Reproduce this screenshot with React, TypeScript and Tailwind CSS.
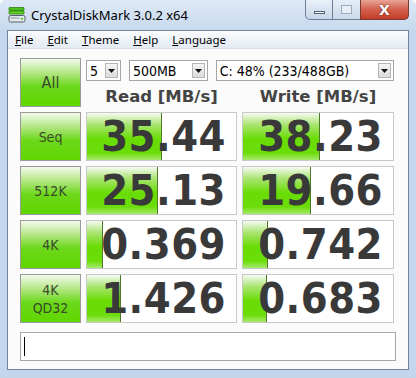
import React from "react";

const rows = [
  { label: ["Seq"], read: "35.44", rw: 75, write: "38.23", ww: 77 },
  { label: ["512K"], read: "25.13", rw: 71, write: "19.66", ww: 68 },
  { label: ["4K"], read: "0.369", rw: 16, write: "0.742", ww: 25 },
  { label: ["4K", "QD32"], read: "1.426", rw: 34, write: "0.683", ww: 24 },
];

function DriveIcon() {
  return (
    <svg width="18" height="18" viewBox="0 0 18 18">
      <rect x="1" y="1.5" width="15" height="3" rx="0.5" fill="#4cc21a" stroke="#2f7d12" strokeWidth="0.8" />
      <rect x="1" y="5" width="15" height="3" rx="0.5" fill="#5fd421" stroke="#2f7d12" strokeWidth="0.8" />
      <rect x="1" y="9.5" width="16" height="6.5" rx="1.5" fill="#e4e8ec" stroke="#55606b" strokeWidth="1" />
      <rect x="2.5" y="11.5" width="9" height="1" fill="#8a949e" />
      <rect x="13" y="12" width="2" height="1.5" fill="#3cc21a" />
    </svg>
  );
}

function Combo({ text, width }: { text: string; width: string }) {
  return (
    <div className={`flex h-[21px] items-center justify-between border border-[#a5a5a5] bg-white pl-[3px] pr-[2px] ${width}`}>
      <span className="text-[14px] leading-none text-black">{text}</span>
      <div className="flex h-[15px] w-[13px] items-center justify-center border border-[#b4b4b4] bg-[linear-gradient(to_bottom,#f4f4f4,#dcdcdc)]">
        <svg width="7" height="4" viewBox="0 0 7 4">
          <path d="M0 0h7L3.5 4z" fill="#111" />
        </svg>
      </div>
    </div>
  );
}

function Cell({ value, fill }: { value: string; fill: number }) {
  return (
    <div className="relative flex h-[49px] items-center justify-end border border-[#c8c8c8] bg-white pr-[10px]">
      <div
        className="absolute left-0 top-0 h-full border-r border-[#4d7a2a] bg-[linear-gradient(to_bottom,#f6fbf2_0%,#a8e470_25%,#69dc04_55%,#6bdd0a_85%,#a6ea6c_100%)]"
        style={{ width: fill }}
      />
      <span className="relative font-['DejaVu_Sans_Condensed','DejaVu_Sans',sans-serif] text-[43px] font-bold leading-none tracking-[0.5px] text-[#393939]">
        {value}
      </span>
    </div>
  );
}

function TestButton({ lines, big }: { lines: string[]; big?: boolean }) {
  return (
    <div className="flex h-[49px] flex-col items-center justify-center border border-[#9a9a9a] bg-[linear-gradient(to_bottom,#f4faee_0%,#b2e682_30%,#6cd81a_58%,#5fd600_100%)] leading-[18px] text-[#3a4a2c]">
      {lines.map((l) => (
        <span key={l} className={big ? "text-[16px]" : "text-[14px]"}>
          {l}
        </span>
      ))}
    </div>
  );
}

export default function App() {
  return (
    <div className="flex h-[378px] w-[416px] flex-col overflow-hidden rounded-t-[6px] bg-[#c3d6ec] font-['DejaVu_Sans_Condensed','DejaVu_Sans',sans-serif]">
      {/* Title bar */}
      <div className="flex h-[30px] shrink-0 items-start bg-[linear-gradient(to_bottom,#dde9f6,#c8daee)]">
        <div className="flex items-center gap-[5px] pl-[8px] pt-[6px]">
          <DriveIcon />
          <span className="font-['Noto_Sans',sans-serif] text-[13px] leading-none text-black">
            CrystalDiskMark 3.0.2 x64
          </span>
        </div>
        <div className="ml-auto mr-[7px] flex h-[20px]">
          <div className="flex w-[28px] items-center justify-center rounded-bl-[5px] border border-t-0 border-[#6b7f99] bg-[linear-gradient(to_bottom,#eaf1f9,#c7d6e8)]">
            <div className="mt-[6px] h-[3px] w-[11px] border border-[#4f5f73] bg-white" />
          </div>
          <div className="flex w-[27px] items-center justify-center border-b border-[#6b7f99] bg-[linear-gradient(to_bottom,#e6eef7,#cbd9ea)]">
            <div className="h-[9px] w-[11px] border border-[#9aabbf] bg-[#e8eef6]" />
          </div>
          <div className="flex w-[49px] items-center justify-center rounded-br-[5px] border border-t-0 border-[#7a3b30] bg-[linear-gradient(to_bottom,#e8a495,#d2604d_50%,#c23d27)]">
            <span className="font-['DejaVu_Sans',sans-serif] text-[14px] font-bold leading-none text-white [text-shadow:0_0_2px_#5a1a10]">
              X
            </span>
          </div>
        </div>
      </div>

      {/* Frame + client */}
      <div className="flex min-h-0 flex-1 px-[7px] pb-[8px]">
        <div className="flex flex-1 flex-col border border-[#6f839c] bg-[#fbfbfb]">
          {/* Menu */}
          <div className="flex h-[18px] shrink-0 items-center gap-[14px] border-b border-[#d5dce6] bg-[linear-gradient(to_bottom,#fafcfe,#e4eaf3)] pl-[7px] font-['Noto_Sans',sans-serif] text-[11.5px] leading-none text-black">
            <span><span className="underline">F</span>ile</span>
            <span><span className="underline">E</span>dit</span>
            <span><span className="underline">T</span>heme</span>
            <span><span className="underline">H</span>elp</span>
            <span><span className="underline">L</span>anguage</span>
          </div>

          {/* Content */}
          <div className="flex flex-col px-[12px] pt-[9px]">
            <div className="grid grid-cols-[61px_151px_152px] gap-[5px]">
              <TestButton lines={["All"]} big />
              <div className="col-span-2 flex flex-col">
                <div className="mt-[2px] flex gap-[8px]">
                  <Combo text="5" width="w-[35px]" />
                  <Combo text="500MB" width="w-[79px]" />
                  <Combo text="C: 48% (233/488GB)" width="w-[179px]" />
                </div>
                <div className="mt-[8px] grid grid-cols-[151px_152px] gap-[5px] font-['DejaVu_Sans',sans-serif] text-[16.5px] font-bold leading-none text-[#444]">
                  <span className="text-center">Read [MB/s]</span>
                  <span className="text-center">Write [MB/s]</span>
                </div>
              </div>
              {rows.map((r) => (
                <React.Fragment key={r.label.join()}>
                  <TestButton lines={r.label} />
                  <Cell value={r.read} fill={r.rw} />
                  <Cell value={r.write} fill={r.ww} />
                </React.Fragment>
              ))}
            </div>
            <div className="mt-[9px] flex h-[29px] items-center border border-[#a8a8a8] bg-white pl-[3px]">
              <div className="h-[19px] w-[1px] bg-black" />
            </div>
          </div>
        </div>
      </div>
    </div>
  );
}
